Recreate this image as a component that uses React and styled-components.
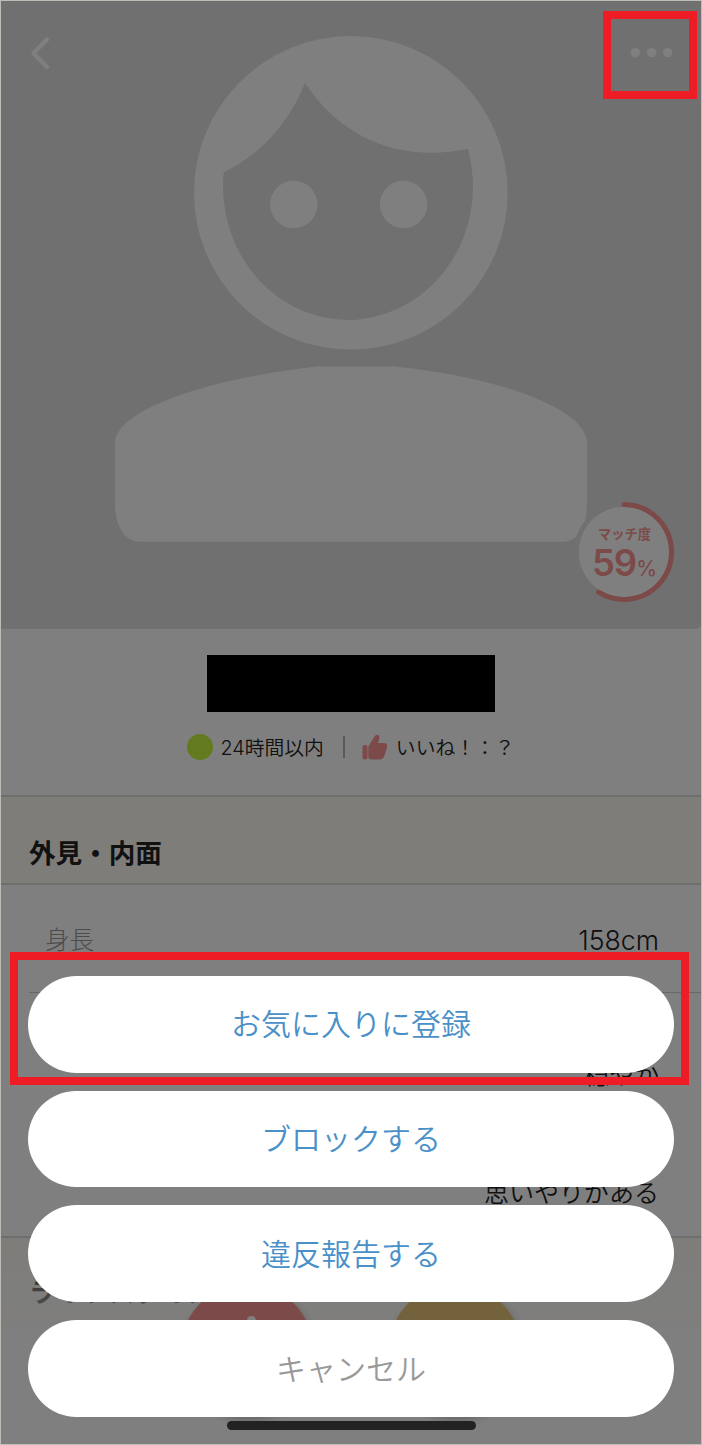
import styled, { createGlobalStyle } from 'styled-components';

const GlobalStyle = createGlobalStyle`
   * {
      box-sizing: border-box;
   }
   body {
      margin: 0;
      font-family: "Noto Sans CJK JP", sans-serif;
      color: #222;
   }
`

// 画面全体
const Frame = styled.div`
   position: relative;
   width: 702px;
   height: 1445px;
   border: 1px solid #bebcb4;
   overflow: hidden;
   background-color: white;
`

const Page = styled.main`
   display: flex;
   flex-direction: column;
`

// プロフィール写真
const Hero = styled.section`
   position: relative;
   height: 628px;
   background-color: #e0e0e0;
   border-bottom-right-radius: 5px;
`
const Avatar = styled.svg`
   display: block;
   width: 700px;
   height: 628px;
`
const Match = styled.div`
   position: absolute;
   left: 573px;
   top: 501px;
   width: 100px;
   height: 100px;
   display: flex;
   flex-direction: column;
   align-items: center;
   color: #f89490;
   border-radius: 50%;
   background-color: #e0e0e0;
`
const Ring = styled.svg`
   position: absolute;
   inset: 0;
`
const MatchLabel = styled.span`
   position: relative;
   margin-top: 23px;
   padding-left: 1px;
   font-size: 13.3px;
   line-height: 18px;
   font-weight: 700;
   white-space: nowrap;
`
const MatchValue = styled.span`
   position: relative;
   font-family: Inter, sans-serif;
   font-size: 36.5px;
   line-height: 40px;
   font-weight: 560;
   letter-spacing: -1px;
   white-space: nowrap;

   small {
      font-size: 21px;
      font-weight: 450;
   }
`

// 名前とステータス
const Summary = styled.section`
   height: 166px;
   padding-top: 26px;
   display: flex;
   flex-direction: column;
   align-items: center;
`
const Name = styled.div`
   width: 288px;
   height: 57px;
   background-color: black;
`
const Status = styled.div`
   display: flex;
   align-items: center;
   height: 28px;
   margin-top: 21px;
   font-size: 19.8px;
   line-height: 28px;
   font-weight: 350;
   white-space: nowrap;
`
const StatusText = styled.span`
   margin-top: 1px;
   font-family: Inter, "Noto Sans CJK JP", sans-serif;
`
const Online = styled.i`
   width: 26px;
   height: 26px;
   margin-right: 7px;
   border-radius: 50%;
   background-color: #c8f43c;
`
const Divider = styled.i`
   width: 2px;
   height: 22px;
   margin: 0 17px 0 19px;
   background-color: #b4b4b4;
`
const Thumb = styled.svg`
   width: 26px;
   height: 26px;
   margin-right: 8px;
`

const SectionTitle = styled.h2`
   display: flex;
   height: 90px;
   margin: 0;
   padding: ${(props) => props.$top || 37}px 28px 0;
   border-top: 2px solid #dcdcdc;
   border-bottom: 2px solid #dcdcdc;
   background-color: #fcfaf4;
   font-size: 26.6px;
   line-height: 36px;
   font-weight: 700;
`
const Row = styled.div`
   display: flex;
   justify-content: space-between;
   height: ${(props) => props.$height}px;
   margin-left: 28px;
   padding: ${(props) => props.$top}px 42px 0 16px;
   border-bottom: ${(props) => (props.$noLine ? '0' : '1px solid #d0d0d0')};
   line-height: 36px;
   font-weight: 350;
`
const Label = styled.span`
   color: #999;
   font-size: 24.6px;
   font-weight: 300;
`
const Value = styled.span`
   font-size: 25px;
`
const LatinValue = styled(Value)`
   padding-top: 2px;
   font-family: Inter, sans-serif;
   font-size: 26.7px;
   font-weight: 360;
`

// 画面下のボタンバー
const BottomBar = styled.div`
   position: absolute;
   left: 0;
   right: 0;
   bottom: 0;
   height: 207px;
   background: linear-gradient(rgba(255, 255, 255, 0) 0, rgba(255, 255, 255, 0.7) 87px, white 88px);
`
const RoundButton = styled.div`
   position: absolute;
   left: ${(props) => props.$left}px;
   top: 47px;
   width: 132px;
   height: 132px;
   padding: 32px 0 0 66px;
   border-radius: 50%;
   background-color: ${(props) => props.color};
   box-shadow: 2px 4px 10px rgba(0, 0, 0, 0.22);
`
const Knob = styled.i`
   display: block;
   width: 9px;
   height: 9px;
   border-radius: 50%;
   background-color: white;
`
const HomeBar = styled.div`
   position: absolute;
   left: 225.5px;
   bottom: 14.5px;
   width: 249.5px;
   height: 9px;
   border-radius: 5px;
   background-color: #444;
`

// アクションシート
const Overlay = styled.div`
   position: absolute;
   inset: 0;
   display: flex;
   flex-direction: column;
   justify-content: flex-end;
   gap: 18px;
   padding: 0 27px 27px;
   background-color: rgba(0, 0, 0, 0.5);
`
const Action = styled.button`
   height: 96.8px;
   padding: 0 0 4px;
   border: 0;
   border-radius: 49px;
   background-color: white;
   color: ${(props) => props.color || '#4a90c8'};
   font-family: inherit;
   font-size: 30px;
   line-height: 40px;
   font-weight: 350;
`

// 赤枠
const Mark = styled.div`
   position: absolute;
   left: ${(props) => props.$x}px;
   top: ${(props) => props.$y}px;
   width: ${(props) => props.$w}px;
   height: ${(props) => props.$h}px;
   border: 8px solid #ee1c24;
   pointer-events: none;
`

export default function App() {
   return (
      <Frame>
         <GlobalStyle />
         <Page>
            <Hero>
               <Avatar viewBox="1 1 700 628" fill="white">
                  <circle cx="350.8" cy="192.8" r="156.8" />
                  <path
                     fill="#e0e0e0"
                     d="M305 83C289 122 263 153 223.7 172.5A125 133.5 0 1 0 468 149C402 162 344 141 305 83Z"
                  />
                  <circle cx="293.8" cy="204.5" r="23.7" />
                  <circle cx="403.6" cy="204.5" r="23.7" />
                  <path d="M317 366.5H394C500 377 587 409 587 443V502C587 528 578 541.7 562 541.7H141C125 541.7 115 528 115 502V443C115 411 205 379 317 366.5Z" />
                  <path d="M47 39.5L33.5 53L47 67" fill="none" stroke="white" strokeWidth="4.4" strokeLinecap="round" strokeLinejoin="round" />
                  <circle cx="635.3" cy="52.6" r="4.7" />
                  <circle cx="651.6" cy="52.6" r="4.7" />
                  <circle cx="667.7" cy="52.6" r="4.7" />
               </Avatar>
               <Match>
                  <Ring viewBox="0 0 100 100">
                     <circle cx="50" cy="50" r="45.2" fill="white" />
                     <circle
                        cx="50"
                        cy="50"
                        r="47.5"
                        fill="none"
                        stroke="#f89490"
                        strokeWidth="5"
                        strokeLinecap="round"
                        pathLength="100"
                        strokeDasharray="59 100"
                        transform="rotate(-90 50 50)"
                     />
                  </Ring>
                  <MatchLabel>マッチ度</MatchLabel>
                  <MatchValue>59<small>%</small></MatchValue>
               </Match>
            </Hero>

            <Summary>
               <Name />
               <Status>
                  <Online />
                  <StatusText>24時間以内</StatusText>
                  <Divider />
                  <Thumb viewBox="0 0 26 26" fill="#f89490">
                     <rect x="0.5" y="11" width="5" height="14.5" rx="2" />
                     <path d="M6.3 12.5L12.5 2.5C14.5 -0.5 18 1 17.4 4L16 9H22.5Q26 9.5 25 13.5L22.5 21.5Q21.5 25.5 17 25.5H10Q7.5 25.5 6.3 24Z" />
                  </Thumb>
                  <StatusText>いいね！：？</StatusText>
               </Status>
            </Summary>

            <SectionTitle>外見・内面</SectionTitle>
            <Row $height={108} $top={35}>
               <Label>身長</Label>
               <LatinValue>158cm</LatinValue>
            </Row>
            <Row $height={130} $top={62} $noLine>
               <Label />
               <Value>穏やか</Value>
            </Row>
            <Row $height={113} $top={50} $noLine>
               <Label />
               <Value>思いやりがある</Value>
            </Row>
            <SectionTitle $top={35}>ライフスタイル</SectionTitle>
         </Page>

         <BottomBar>
            <RoundButton $left={180} color="#f89490"><Knob /></RoundButton>
            <RoundButton $left={388} color="#e6c478" />
            <HomeBar />
         </BottomBar>

         <Overlay>
            <Action>お気に入りに登録</Action>
            <Action>ブロックする</Action>
            <Action>違反報告する</Action>
            <Action color="#999">キャンセル</Action>
         </Overlay>

         <Mark $x={602} $y={10} $w={94} $h={88} />
         <Mark $x={9} $y={951} $w={679} $h={133} />
      </Frame>
   )
}
